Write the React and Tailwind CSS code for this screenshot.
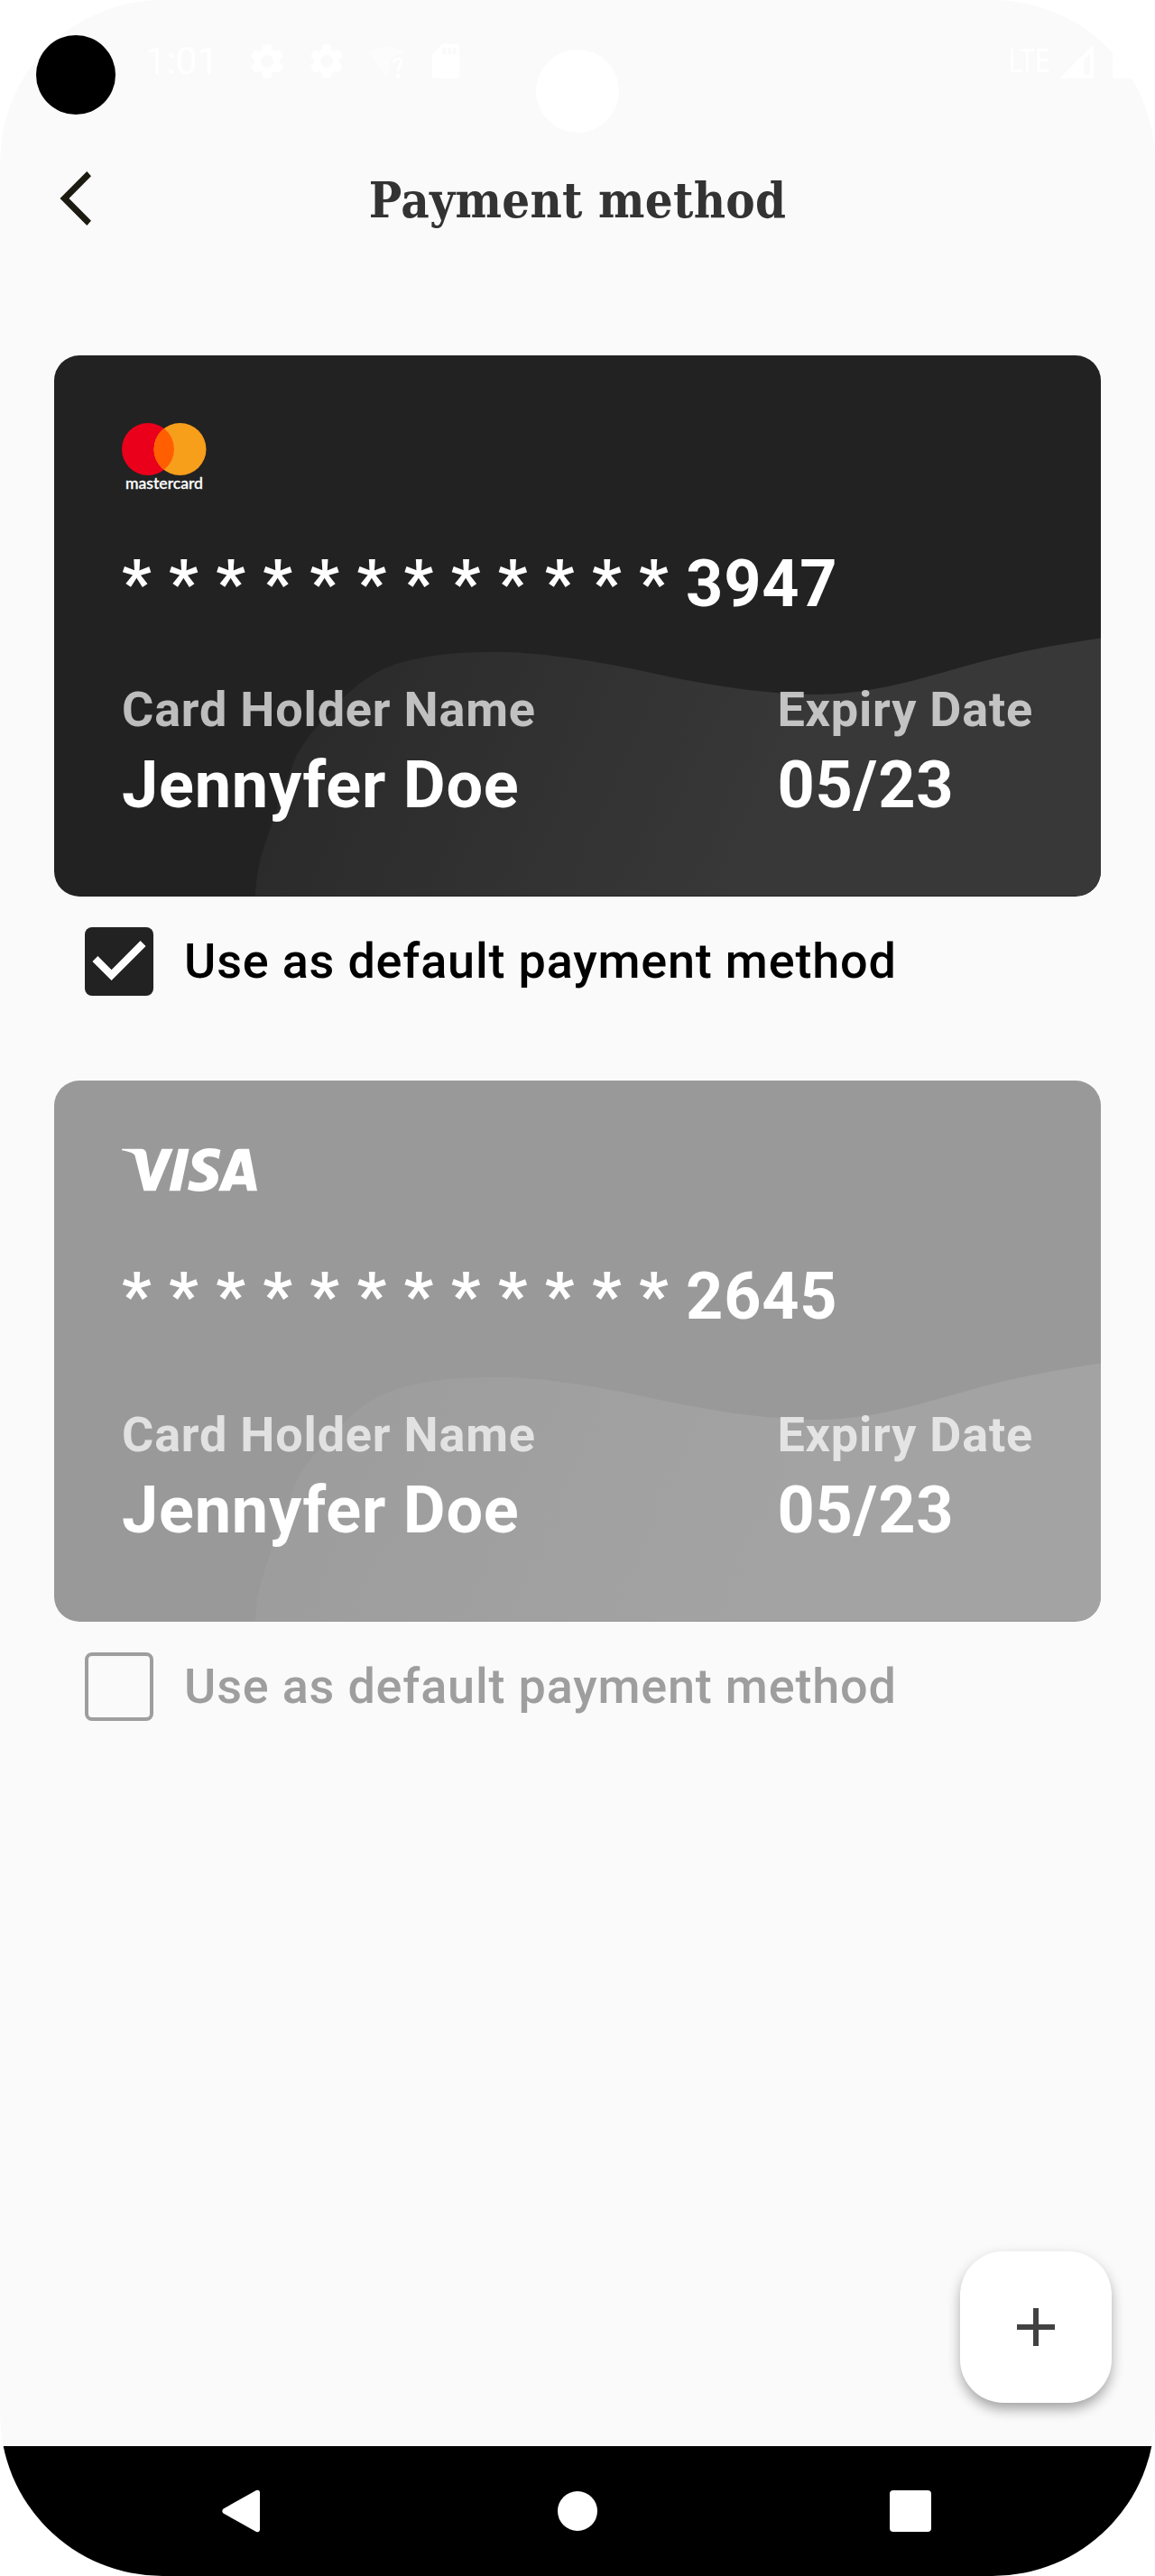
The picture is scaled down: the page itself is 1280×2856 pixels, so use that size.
import React from "react";
import { MdSettings, MdSdCard } from "react-icons/md";

function StatusBar() {
  return (
    <div className="relative flex h-[136px] shrink-0 items-center text-white">
      <div className="absolute left-[594px] top-[55px] size-[92px] rounded-full bg-white" />
      <span className="ml-[161px] w-[112px] text-[42px] leading-[50px]">1:01</span>
      <MdSettings className="size-[46px]" />
      <MdSettings className="ml-[20px] size-[46px]" />
      <svg className="ml-[23px] h-[38px] w-[40px]" viewBox="0 0 40 38" fill="none">
        <path d="M0 9C12 0 28 0 40 9L37 12C30 11 25 16 24 22V28L20 36Z" fill="#fff" opacity="0.35" />
        <path d="M28 21C28 14 38 15 37 20C37 24 33 25 33 30M33 33V37" stroke="#fff" strokeWidth="3" />
      </svg>
      <MdSdCard className="ml-[23px] size-[46px]" />
      <div className="ml-auto flex items-center">
        <span className="w-[56px] origin-left scale-x-[.78] text-[37px] leading-[44px]">LTE</span>
        <svg className="h-[38px] w-[38px]" viewBox="0 0 38 38">
          <path d="M38 0V38H0ZM34 10L27 18V34H34Z" fill="#fff" fillRule="evenodd" />
        </svg>
        <div className="ml-[21px] h-[32px] w-[47px] translate-y-[3px] bg-white" />
      </div>
    </div>
  );
}

function MastercardLogo() {
  return (
    <svg className="-mb-[8px] h-[82px] w-[94px]" viewBox="0 0 94 82">
      <circle cx="29" cy="29" r="29" fill="#eb001b" />
      <circle cx="64.5" cy="29" r="29" fill="#f79e1b" />
      <path d="M46.75 6.1A29 29 0 0 1 46.75 51.9A29 29 0 0 1 46.75 6.1Z" fill="#ff5f00" />
      <text x="4" y="73" textLength="86" lengthAdjust="spacingAndGlyphs" fontSize="16.5" fontWeight="500" fontFamily="Lato, sans-serif" fill="#fff" stroke="#fff" strokeWidth="0.3">
        mastercard
      </text>
    </svg>
  );
}

function VisaLogo() {
  return (
    <svg className="h-[60px] w-[150px]" viewBox="0 0 150 60" fill="#fff">
      <path d="M0 .7H21.5C24.5 .7 26.5 2.2 27.2 5.3L31.5 32.7L44.2 .7H56.8L37.5 47.3H24.4L14.8 9.3C14.4 6.5 12 4.5 0 2.3Z" />
      <path d="M62.8 .7H74.6L64.7 47.3H52.5Z" />
      <path d="M109.4 2L107.5 12C104 10.3 101 9.3 97.6 9.3C92.5 9.3 90.3 11.3 90.3 13.8C90.3 18.5 107 20 107 32C107 42.5 97.5 48 85.7 48C80.5 48 76 46.8 73 45.7L75 35.8C78 37.2 81.5 38.2 85.5 38.2C91 38.2 94.4 36.2 94.4 33.2C94.4 28 77.8 27 77.8 15.3C77.8 6 87 0 97.6 0C102.5 0 106.5 .9 109.4 2Z" />
      <path fillRule="evenodd" d="M130.5 .7H141L150 47.3H139L137.5 40.3H122.5L119.7 47.3H107L124.4 4.3C125.4 2 127.6 .7 130.5 .7ZM132 13.7L125.6 30.7H135.5Z" />
    </svg>
  );
}

function CardWave({ id, from, to }) {
  return (
    <svg className="absolute inset-0 h-[600px] w-[1160px]" viewBox="0 0 1160 600">
      <defs>
        <linearGradient id={id} gradientUnits="userSpaceOnUse" x1="300" y1="400" x2="760" y2="600">
          <stop offset="0" stopColor={from} />
          <stop offset="1" stopColor={to} />
        </linearGradient>
      </defs>
      <path
        fill={`url(#${id})`}
        d="M223 599C225 570 228 555 242 519C250 494 257 473 269 443C280 425 289 412 306 397C322 376 352 344 405 336C430 330 460 329 490 329C535 329 590 337 643 348C697 360 775 376 845 376C905 376 958 359 1019 342C1070 328 1110 321 1160 313.500V599Z"
      />
    </svg>
  );
}

function PaymentCard({ logo, last4, id, faded }) {
  return (
    <div
      className={
        "relative flex h-[600px] flex-col overflow-hidden rounded-[28px] px-[75px] pt-[75px] pb-[81px] text-white " +
        (faded ? "bg-[#999999]" : "bg-[#222222]")
      }
    >
      <CardWave id={id} from={faded ? "#9d9d9d" : "#2b2b2b"} to={faded ? "#a3a3a3" : "#383838"} />
      <div className="relative">{logo}</div>
      <div className="relative mt-[63px] text-[72px] leading-[84px] font-bold tracking-[0.75px] whitespace-nowrap">
        * * * * * * * * * * * * {last4}
      </div>
      <div className="relative mt-auto flex justify-between font-bold tracking-[0.8px]">
        <div className="flex flex-col gap-[11px]">
          <span className="text-[54px] leading-[63px] text-white/70">Card Holder Name</span>
          <span className="text-[72px] leading-[84px]">Jennyfer Doe</span>
        </div>
        <div className="flex flex-col gap-[11px]">
          <span className="text-[54px] leading-[63px] text-white/70">Expiry Date</span>
          <span className="text-[72px] leading-[84px]">05/23</span>
        </div>
      </div>
    </div>
  );
}

function DefaultOption({ checked }) {
  return (
    <div className="mb-[60px] flex h-[144px] items-center gap-[34px] pl-[34px]">
      {checked ? (
        <svg className="size-[76px] rounded-[8px] bg-[#222222]" viewBox="3 3 18 18">
          <path d="M10 17L5 12L6.41 10.59L10 14.17L17.59 6.580L19 8Z" fill="#fff" />
        </svg>
      ) : (
        <div className="size-[76px] rounded-[8px] border-[4px] border-[#9e9e9e]" />
      )}
      <span
        className={
          "mb-[2px] text-[54px] leading-[63px] font-medium tracking-[0.8px] whitespace-nowrap " +
          (checked ? "text-black" : "text-[#9e9e9e]")
        }
      >
        Use as default payment method
      </span>
    </div>
  );
}

export default function App() {
  return (
    <div className="relative h-[2856px] w-[1280px] bg-white font-['Roboto',sans-serif]">
      <div className="relative flex h-full flex-col overflow-hidden rounded-[180px] bg-[#fafafa]">
        <StatusBar />
        <header className="relative flex h-[168px] shrink-0 items-center justify-center">
          <svg className="absolute left-[66px] top-[54px] h-[60px] w-[36px]" viewBox="0 0 36 60" fill="#1c1b12">
            <path d="M30.300 0L35 5.300L10.500 30L35 54.700L30.300 60L.500 30Z" />
          </svg>
          <h1 className="mt-[3px] font-['DejaVu_Serif_Condensed','DejaVu_Serif',serif] text-[54px] leading-[64px] font-bold tracking-[0.3px] text-[#333333]">
            Payment method
          </h1>
        </header>
        <main className="flex grow flex-col px-[60px] pt-[90px]">
          <PaymentCard id="wave-mastercard" logo={<MastercardLogo />} last4="3947" />
          <DefaultOption checked />
          <PaymentCard id="wave-visa" logo={<VisaLogo />} last4="2645" faded />
          <DefaultOption />
        </main>
        <button
          aria-label="Add card"
          className="absolute left-[1064px] top-[2496px] flex size-[168px] items-center justify-center rounded-[48px] bg-white shadow-[0_9px_15px_-3px_rgba(0,0,0,0.28),0_5px_16px_rgba(0,0,0,0.14)]"
        >
          <svg className="size-[42px]" viewBox="0 0 42 42" fill="#424242">
            <path d="M18 0H24V18H42V24H24V42H18V24H0V18H18Z" />
          </svg>
        </button>
        <nav className="flex h-[144px] shrink-0 items-center bg-black pl-[246px]">
          <svg className="h-[48px] w-[42px]" viewBox="0 0 42 48" fill="#fff">
            <path d="M42 3V45Q41.500 48 38 47L1.500 26.500Q-1 24 1.500 21.500L38 1Q41.500 0 42 3Z" />
          </svg>
          <div className="ml-[330px] size-[44px] rounded-full bg-white" />
          <div className="ml-[324px] size-[46px] rounded-[4px] bg-white" />
        </nav>
      </div>
      <div className="absolute left-[40px] top-[39px] size-[88px] rounded-full bg-black" />
    </div>
  );
}
